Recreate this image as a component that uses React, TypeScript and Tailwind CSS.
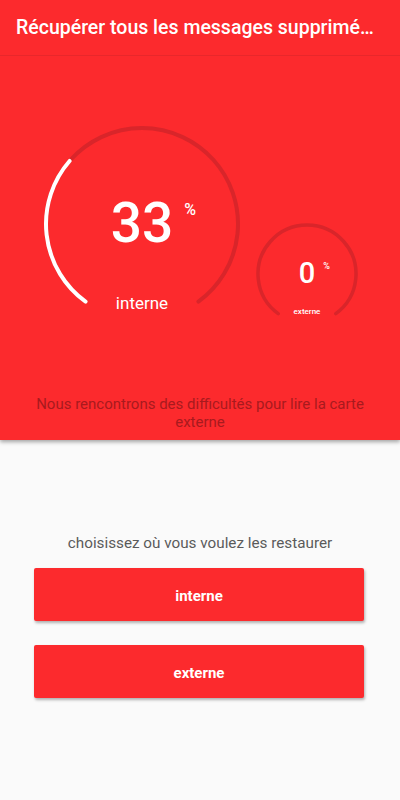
import React from 'react';

const Gauge: React.FC<{
  size: number;
  r: number;
  stroke: number;
  value: number;
  label: string;
  numClass: string;
  pctClass: string;
  labelClass: string;
}> = ({ size, r, stroke, value, label, numClass, pctClass, labelClass }) => {
  const c = size / 2;
  const pt = (deg: number) => {
    const a = (deg * Math.PI) / 180;
    return [c + r * Math.cos(a), c + r * Math.sin(a)];
  };
  const [sx, sy] = pt(126);
  const [ex, ey] = pt(54);
  const sweep = (288 * value) / 100;
  const [vx, vy] = pt(126 + sweep);
  return (
    <div className="relative shrink-0" style={{ width: size, height: size }}>
      <svg width={size} height={size} viewBox={`0 0 ${size} ${size}`}>
        <path d={`M${sx} ${sy} A${r} ${r} 0 1 1 ${ex} ${ey}`} fill="none" stroke="#d9252a" strokeWidth={stroke} strokeLinecap="round" />
        {value > 0 && (
          <path d={`M${sx} ${sy} A${r} ${r} 0 ${sweep > 180 ? 1 : 0} 1 ${vx} ${vy}`} fill="none" stroke="#ffffff" strokeWidth={stroke} strokeLinecap="round" />
        )}
      </svg>
      <div className="absolute inset-0 flex items-center justify-center">
        <span className={`relative text-white leading-none font-medium ${numClass}`}>
          {value}
          <span className={`absolute left-full text-white font-medium ${pctClass}`}>%</span>
        </span>
      </div>
      <div className={`absolute left-0 right-0 text-center text-white ${labelClass}`}>{label}</div>
    </div>
  );
};

export default function App() {
  return (
    <div className="relative w-[400px] h-[800px] overflow-hidden bg-[#fafafa] font-['Roboto',sans-serif]">
      <div className="relative z-10 bg-[#fc2a2d] shadow-[0_2px_4px_rgba(0,0,0,0.35)]">
        <div className="h-[56px] flex items-center px-4 border-b border-[#e8272b]">
          <h1 className="text-white text-[19.5px] font-medium whitespace-nowrap">Récupérer tous les messages supprimé…</h1>
        </div>

        <div className="flex items-start pt-[68px] pl-[42px]">
          <Gauge
            size={200}
            r={96}
            stroke={4}
            value={33}
            label="interne"
            numClass="text-[55px] -mt-[2px]"
            pctClass="ml-[11px] top-[6px] text-[16px]"
            labelClass="top-[167px] text-[17px]"
          />
          <div className="ml-[12px] mt-[97px]">
            <Gauge
              size={106}
              r={49}
              stroke={3.5}
              value={0}
              label="externe"
              numClass="text-[29px] -mt-[2px]"
              pctClass="ml-[8px] top-[3px] text-[9px]"
              labelClass="top-[85px] text-[8px] font-medium"
            />
          </div>
        </div>

        <p className="px-8 pt-[68px] pb-[9px] text-center text-[15px] leading-[18px] text-[#a81a1e]">
          Nous rencontrons des difficultés pour lire la carte externe
        </p>
      </div>

      <div className="absolute right-0 top-[203px] w-[4px] h-[160px] rounded-l-[3px] bg-[#fbd0d0]" />

      <div className="flex flex-col items-center pt-[92px]">
        <p className="text-[15.25px] text-[#5a5a5a]">choisissez où vous voulez les restaurer</p>
        <div className="w-[330px] flex flex-col gap-[24px] mt-[13px] ml-[-2px]">
          <button className="h-[53px] pt-[3px] rounded-[2px] bg-[#fc2a2d] text-white text-[15px] font-bold shadow-[1px_2px_3px_rgba(0,0,0,0.3)]">interne</button>
          <button className="h-[53px] pt-[3px] rounded-[2px] bg-[#fc2a2d] text-white text-[15px] font-bold shadow-[1px_2px_3px_rgba(0,0,0,0.3)]">externe</button>
        </div>
      </div>
    </div>
  );
}
